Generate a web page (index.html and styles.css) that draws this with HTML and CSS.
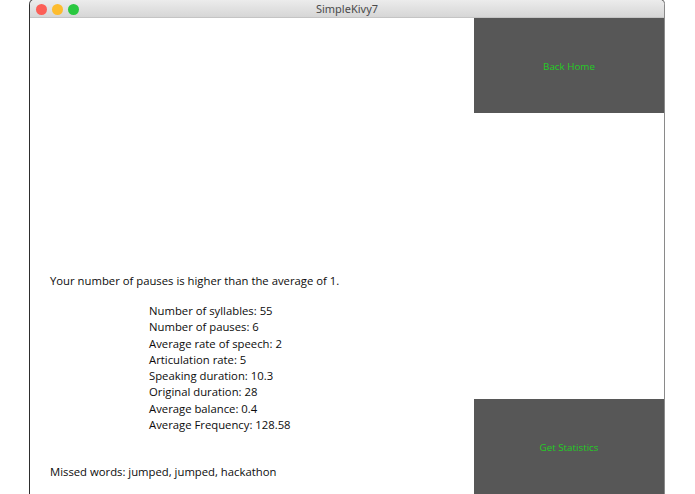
FILE: index.html
```html
<!DOCTYPE html>
<html>
<head>
<meta charset="utf-8">
<link rel="stylesheet" href="styles.css">
</head>
<body>
<div class="window">
  <div class="titlebar">
    <div class="lights">
      <span class="light red"></span>
      <span class="light yellow"></span>
      <span class="light green"></span>
    </div>
    <div class="title">SimpleKivy7</div>
  </div>
  <div class="content">
    <div class="main">
      <p class="summary">Your number of pauses is higher than the average of 1.</p>
      <div class="stats">
        <div>Number of syllables: 55</div>
        <div>Number of pauses: 6</div>
        <div>Average rate of speech: 2</div>
        <div>Articulation rate: 5</div>
        <div>Speaking duration: 10.3</div>
        <div>Original duration: 28</div>
        <div>Average balance: 0.4</div>
        <div>Average Frequency: 128.58</div>
      </div>
      <p class="missed">Missed words: jumped, jumped, hackathon</p>
    </div>
    <div class="side">
      <div class="btn">Back Home</div>
      <div class="btn">Get Statistics</div>
    </div>
  </div>
</div>
</body>
</html>
```
FILE: styles.css
```css
html, body {
  margin: 0;
  padding: 0;
  background: #ffffff;
}
body {
  width: 695px;
  height: 494px;
  overflow: hidden;
}
.window {
  margin-left: 29px;
  width: 634px;
  height: 494px;
  border-left: 1px solid #2e2e2e;
  border-right: 1px solid #8a8a8a;
  border-radius: 5px 5px 0 0;
  display: flex;
  flex-direction: column;
  overflow: hidden;
  box-sizing: content-box;
  box-shadow: 0 -1px 0 #3a3a3a;
}
.titlebar {
  height: 17px;
  flex: none;
  background: linear-gradient(#ececec, #d6d6d6);
  border-bottom: 1px solid #c4c4c4;
  position: relative;
  display: flex;
  align-items: center;
  justify-content: center;
}
.lights {
  position: absolute;
  left: 6px;
  top: 4px;
  display: flex;
  gap: 5px;
}
.light {
  width: 11px;
  height: 11px;
  border-radius: 50%;
  display: block;
}
.red { background: #fc5f57; }
.yellow { background: #fdbc2e; }
.green { background: #2ac840; }
.title {
  font-family: "Noto Sans", "Open Sans", sans-serif;
  font-size: 11px;
  color: #4a4a4a;
}
.content {
  flex: 1;
  display: flex;
  background: #ffffff;
}
.main {
  flex: 1;
  padding: 255px 0 0 20px;
  font-family: "Open Sans", "Noto Sans", sans-serif;
  font-size: 11.3px;
  color: #0c0c0c;
}
.summary {
  margin: 0;
  line-height: 16px;
}
.stats {
  margin: 14px 0 0 99px;
  line-height: 16.3px;
}
.missed {
  margin: 31px 0 0 0;
  line-height: 16px;
}
.side {
  width: 190px;
  display: flex;
  flex-direction: column;
  justify-content: space-between;
}
.btn {
  height: 95px;
  box-sizing: border-box;
  padding-top: 2px;
  background: #575757;
  color: #24cc24;
  font-family: "Open Sans", "Noto Sans", sans-serif;
  font-size: 9.8px;
  display: flex;
  align-items: center;
  justify-content: center;
}
```
